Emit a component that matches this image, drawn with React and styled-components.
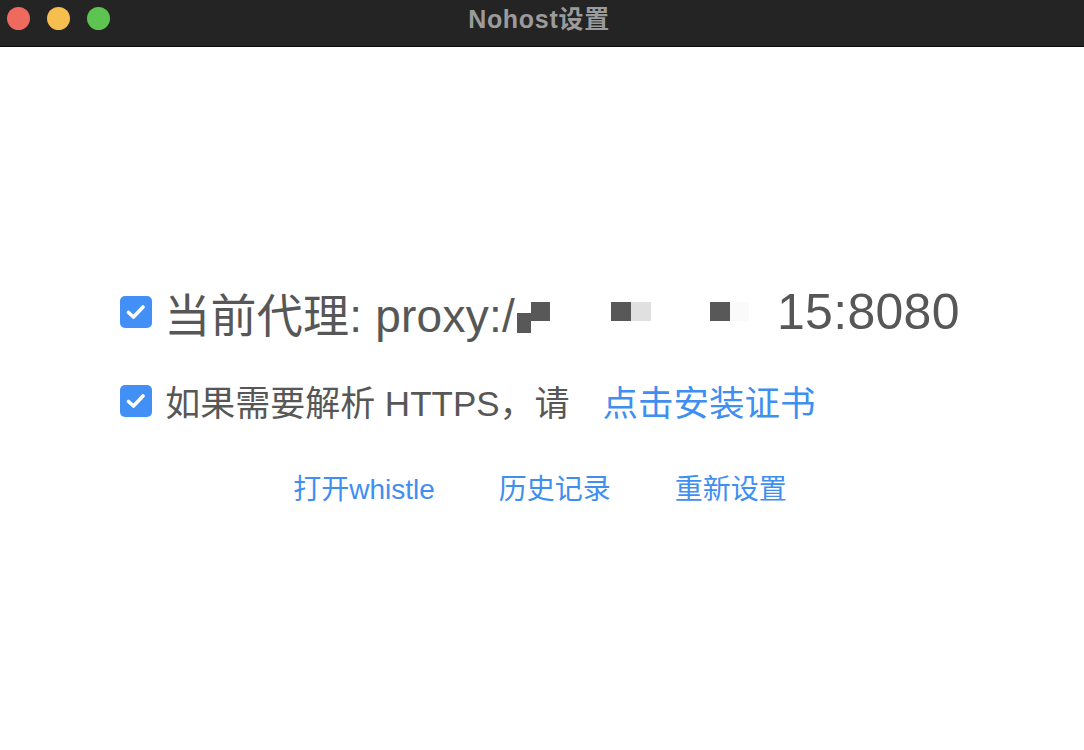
import React from "react";
import styled, { createGlobalStyle } from "styled-components";

const GlobalStyle = createGlobalStyle`
  html, body {
    margin: 0;
    background: #ffffff;
  }
  body {
    font-family: "Liberation Sans", "Noto Sans CJK SC", sans-serif;
  }
`;

const Window = styled.div`
  width: 1084px;
  height: 750px;
  display: flex;
  flex-direction: column;
  background: #fff;
  overflow: hidden;
`;

const TitleBar = styled.div`
  height: 46px;
  flex: none;
  background: #242424;
  border-bottom: 1px solid #0c0c0c;
  display: grid;
  grid-template-columns: 1fr auto 1fr;
  align-items: center;
`;

const Lights = styled.div`
  display: flex;
  gap: 17px;
  padding-left: 7px;
  margin-top: -10px;
`;

const Light = styled.span`
  width: 23px;
  height: 23px;
  border-radius: 50%;
  background: ${(p) => p.$color};
`;

const Title = styled.div`
  color: #9b9b9b;
  font-weight: bold;
  font-size: 25px;
  letter-spacing: 0.7px;
  margin-top: -13px;
  margin-left: -6px;
  font-family: "Liberation Sans", "Noto Sans CJK SC", sans-serif;
`;

const Content = styled.main`
  flex: 1;
  display: flex;
  flex-direction: column;
  align-items: center;
  justify-content: center;
  padding-bottom: 6px;
`;

const Panel = styled.div`
  display: flex;
  flex-direction: column;
  align-items: flex-start;
  margin-left: -4px;
`;

const Row = styled.div`
  display: flex;
  align-items: center;
  height: ${(p) => p.$height}px;
  margin-bottom: ${(p) => p.$gap || 0}px;
  color: #575757;
  font-size: ${(p) => p.$size}px;
  white-space: nowrap;
`;

const Label = styled.span`
  letter-spacing: ${(p) => p.$spacing || 0}px;
`;

const CheckBox = styled.span`
  width: 32px;
  height: 32px;
  flex: none;
  border-radius: 5px;
  background: #428ff5;
  display: flex;
  align-items: center;
  justify-content: center;
  margin-right: ${(p) => p.$gap}px;
`;

const Redact = styled.span`
  display: inline-flex;
  align-items: flex-start;
  height: 34px;
  margin-top: 14px;
  margin-left: ${(p) => p.$left || 0}px;
`;

const Block = styled.span`
  display: inline-block;
  width: ${(p) => p.$w}px;
  height: ${(p) => p.$h || 19}px;
  margin-top: ${(p) => p.$top || 0}px;
  background: ${(p) => p.$color || "#585858"};
`;

const Port = styled.span`
  margin-left: 28px;
  font-size: 50px;
  letter-spacing: 0.3px;
`;

const Link = styled.a`
  color: #3f8ef2;
  text-decoration: none;
  cursor: pointer;
  font-size: ${(p) => p.$size || 28}px;
  margin-left: ${(p) => p.$left || 0}px;
`;

const Actions = styled.nav`
  display: flex;
  gap: 64px;
  height: 36px;
  align-items: center;
  margin-top: 46px;
  margin-left: -4px;
`;

function Check() {
  return (
    <svg width="20" height="16" viewBox="0 0 20 16">
      <path d="M2.5 8.5 L7.5 13 L17 3" fill="none" stroke="#fff" strokeWidth="3.6" strokeLinecap="round" strokeLinejoin="round" />
    </svg>
  );
}

export default function App() {
  return (
    <>
      <GlobalStyle />
      <Window>
        <TitleBar>
          <Lights>
            <Light $color="#ee6a5f" />
            <Light $color="#f5be4f" />
            <Light $color="#5dc452" />
          </Lights>
          <Title>Nohost设置</Title>
          <div />
        </TitleBar>
        <Content>
          <Panel>
            <Row $height={50} $gap={42} $size={46}>
              <CheckBox $gap={12}><Check /></CheckBox>
              <Label $spacing={0.25}>当前代理: proxy:/</Label>
              <Redact $left={2}>
                <Block $w={14} $h={20} $top={11} />
                <Block $w={19} $top={0} />
              </Redact>
              <Redact $left={61}>
                <Block $w={20} />
                <Block $w={20} $color="#e0e0e0" />
              </Redact>
              <Redact $left={59}>
                <Block $w={20} />
                <Block $w={19} $color="#fafafa" />
              </Redact>
              <Port>15:8080</Port>
            </Row>
            <Row $height={44} $size={35}>
              <CheckBox $gap={13}><Check /></CheckBox>
              <Label>如果需要解析 HTTPS，请</Label>
              <Link $size={35.5} $left={33}>点击安装证书</Link>
            </Row>
          </Panel>
          <Actions>
            <Link>打开whistle</Link>
            <Link>历史记录</Link>
            <Link>重新设置</Link>
          </Actions>
        </Content>
      </Window>
    </>
  );
}
